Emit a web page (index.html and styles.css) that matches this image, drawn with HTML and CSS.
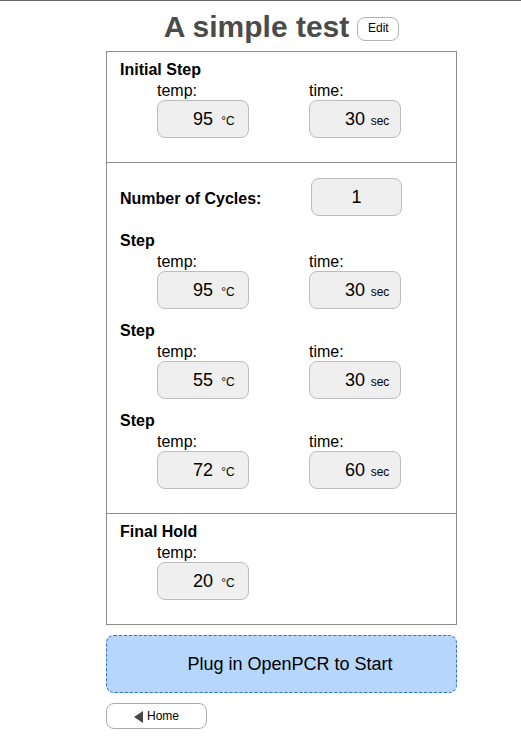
FILE: index.html
```html
<!DOCTYPE html>
<html>
<head>
<meta charset="utf-8">
<title>A simple test</title>
<link rel="stylesheet" href="styles.css">
</head>
<body>
<div class="page">
  <header class="title-bar">
    <h1 class="title">A simple test</h1>
    <button class="edit-btn">Edit</button>
  </header>

  <div class="protocol">
    <section class="block">
      <h2 class="block-heading">Initial Step</h2>
      <div class="fields">
        <div class="field">
          <div class="field-label">temp:</div>
          <div class="value-box"><span class="num">95</span><span class="unit">°C</span></div>
        </div>
        <div class="field">
          <div class="field-label">time:</div>
          <div class="value-box"><span class="num">30</span><span class="unit">sec</span></div>
        </div>
      </div>
    </section>

    <section class="block block-cycles">
      <div class="cycles-row">
        <div class="cycles-label">Number of Cycles:</div>
        <div class="value-box cycles-box">1</div>
      </div>

      <div class="step">
        <h2 class="block-heading">Step</h2>
        <div class="fields">
          <div class="field">
            <div class="field-label">temp:</div>
            <div class="value-box"><span class="num">95</span><span class="unit">°C</span></div>
          </div>
          <div class="field">
            <div class="field-label">time:</div>
            <div class="value-box"><span class="num">30</span><span class="unit">sec</span></div>
          </div>
        </div>
      </div>

      <div class="step">
        <h2 class="block-heading">Step</h2>
        <div class="fields">
          <div class="field">
            <div class="field-label">temp:</div>
            <div class="value-box"><span class="num">55</span><span class="unit">°C</span></div>
          </div>
          <div class="field">
            <div class="field-label">time:</div>
            <div class="value-box"><span class="num">30</span><span class="unit">sec</span></div>
          </div>
        </div>
      </div>

      <div class="step">
        <h2 class="block-heading">Step</h2>
        <div class="fields">
          <div class="field">
            <div class="field-label">temp:</div>
            <div class="value-box"><span class="num">72</span><span class="unit">°C</span></div>
          </div>
          <div class="field">
            <div class="field-label">time:</div>
            <div class="value-box"><span class="num">60</span><span class="unit">sec</span></div>
          </div>
        </div>
      </div>
    </section>

    <section class="block">
      <h2 class="block-heading">Final Hold</h2>
      <div class="fields">
        <div class="field">
          <div class="field-label">temp:</div>
          <div class="value-box"><span class="num">20</span><span class="unit">°C</span></div>
        </div>
      </div>
    </section>
  </div>

  <div class="plug">Plug in OpenPCR to Start</div>

  <button class="home-btn"><span class="tri"></span><span>Home</span></button>
</div>
</body>
</html>
```

FILE: styles.css
```css
html, body {
  background: #fff;
}
body {
  margin: 0;
  border-top: 1px solid #6b6b6b;
  font-family: "Liberation Sans", Arial, Helvetica, sans-serif;
  color: #000;
}
.page {
  margin-left: 106px;
  width: 351px;
}

/* header */
.title-bar {
  height: 50px;
  box-sizing: border-box;
  padding-top: 9px;
  display: flex;
  justify-content: center;
  align-items: flex-start;
  gap: 8px;
}
.title {
  margin: 0;
  font-size: 30px;
  line-height: 34px;
  font-weight: bold;
  color: #4b4b4b;
}
.edit-btn {
  margin-top: 7px;
  box-sizing: border-box;
  width: 42px;
  height: 24px;
  padding: 0 0 2px;
  font-family: "Liberation Sans", Arial, sans-serif;
  font-size: 12px;
  line-height: 20px;
  color: #000;
  background: #fff;
  border: 1px solid #b3b3b3;
  border-radius: 8px;
}

/* protocol box */
.protocol {
  border: 1px solid #8c8c8c;
}
.block {
  padding: 9px 0 24px 13px;
}
.block + .block {
  border-top: 1px solid #8c8c8c;
}
.block-cycles {
  padding-top: 15px;
}
.block-heading {
  margin: 0 0 3px;
  font-size: 16px;
  line-height: 18px;
  font-weight: bold;
}
.fields {
  display: flex;
  gap: 60px;
  margin-left: 37px;
}
.field {
  width: 92px;
}
.field-label {
  font-size: 16px;
  line-height: 18px;
}
.value-box {
  box-sizing: border-box;
  height: 38px;
  border: 1px solid #bcbcbc;
  border-radius: 8px;
  background: #efefef;
  padding: 1px 5px 0 0;
  font-size: 18px;
  line-height: 35px;
  text-align: right;
  white-space: nowrap;
}
.unit {
  display: inline-block;
  width: 30px;
  text-align: center;
  font-size: 12px;
  line-height: 14px;
}

.cycles-row {
  display: flex;
  align-items: center;
}
.cycles-label {
  width: 191px;
  padding-top: 4px;
  font-size: 16px;
  line-height: 18px;
  font-weight: bold;
}
.cycles-box {
  width: 91px;
  padding-right: 0;
  text-align: center;
}
.step {
  margin-top: 13px;
}
.cycles-row + .step {
  margin-top: 16px;
}

/* plug button */
.plug {
  margin-top: 10px;
  box-sizing: border-box;
  height: 58px;
  border: 1px dashed #2d6bdc;
  border-radius: 8px;
  background: #b6d6fc;
  padding-left: 17px;
  font-size: 18px;
  line-height: 56px;
  text-align: center;
  color: #000;
}

/* home button */
.home-btn {
  margin-top: 10px;
  box-sizing: border-box;
  width: 101px;
  height: 26px;
  padding: 0;
  border: 1px solid #ababab;
  border-radius: 8px;
  background: #fff;
  display: flex;
  align-items: center;
  justify-content: center;
  gap: 4px;
  font-family: "Liberation Sans", Arial, sans-serif;
  font-size: 12px;
  line-height: 14px;
  color: #000;
}
.tri {
  width: 0;
  height: 0;
  border-top: 6px solid transparent;
  border-bottom: 6px solid transparent;
  border-right: 9px solid #474747;
  margin-top: 1px;
}
```
